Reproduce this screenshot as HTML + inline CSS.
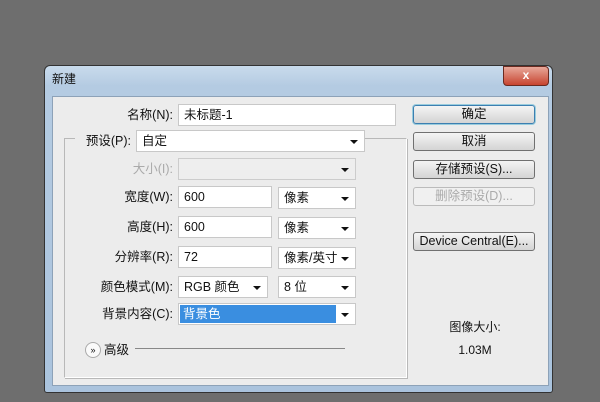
<!DOCTYPE html><html><head><meta charset="utf-8"><style>
body{margin:0;width:600px;height:402px;background:#6e6e6e;position:relative;overflow:hidden;font-family:"Liberation Sans","Noto Sans CJK SC",sans-serif;font-size:12px;color:#111}
.a{position:absolute}
.win{left:44px;top:65px;width:509px;height:328px;border-radius:6px 6px 3px 3px;background:linear-gradient(180deg,#c9dbec,#b4cbe2 20px,#aac3dd);border:1px solid #333;box-sizing:border-box}
.client{left:52px;top:96px;width:495px;height:288px;background:#ececec;border:1px solid #8da2b8}
.in{position:absolute;background:#fff;border:1px solid #c8c8c8;box-sizing:border-box;height:22px;padding:0 5px;display:flex;align-items:center;font-size:12.5px;line-height:1}
.sel:after{content:"";position:absolute;right:6px;top:9px;border:4px solid transparent;border-top:4px solid #111}
.lab{position:absolute;text-align:right;width:120px;font-size:12.5px;line-height:1}
.btn{position:absolute;left:413px;width:122px;height:19px;border:1px solid #707070;border-radius:3px;box-sizing:border-box;background:linear-gradient(#f4f4f4,#e4e4e4 50%,#d4d4d4);text-align:center;line-height:17px;font-size:12.5px}
</style></head><body>
<div class="a win"></div>
<div class="a" style="left:52px;top:70px;font-size:12px">新建</div>
<div class="a" style="left:503px;top:66px;width:44px;height:18px;border-radius:0 4px 4px 4px;background:linear-gradient(#e8a89a,#c7442f);border:1px solid #6a2a20;color:#fff;text-align:center;font-weight:bold;line-height:17px">x</div>
<div class="a client"></div>
<div class="a" style="left:64px;top:138px;width:341px;height:238px;border:1px solid #b8b8b8;border-right-color:#fff;border-bottom-color:#fff;box-shadow:1px 1px 0 #b8b8b8"></div>
<div class="a" style="left:75px;top:132px;width:290px;height:12px;background:#ececec"></div>
<div class="lab" style="left:53px;top:109px">名称(N):</div>
<div class="in" style="left:178px;top:104px;width:218px">未标题-1</div>
<div class="lab" style="left:11px;top:135px">预设(P):</div>
<div class="in sel" style="left:136px;top:130px;width:229px">自定</div>
<div class="lab" style="left:53px;top:163px;color:#aaa">大小(I):</div>
<div class="in sel" style="left:178px;top:158px;width:178px;background:#eee;border-color:#ccc"></div>
<div class="lab" style="left:53px;top:191px">宽度(W):</div>
<div class="in" style="left:178px;top:186px;width:94px">600</div>
<div class="in sel" style="left:278px;top:187px;width:78px">像素</div>
<div class="lab" style="left:53px;top:221px">高度(H):</div>
<div class="in" style="left:178px;top:216px;width:94px">600</div>
<div class="in sel" style="left:278px;top:217px;width:78px">像素</div>
<div class="lab" style="left:53px;top:251px">分辨率(R):</div>
<div class="in" style="left:178px;top:246px;width:94px">72</div>
<div class="in sel" style="left:278px;top:247px;width:78px">像素/英寸</div>
<div class="lab" style="left:53px;top:281px">颜色模式(M):</div>
<div class="in sel" style="left:178px;top:276px;width:90px">RGB 颜色</div>
<div class="in sel" style="left:278px;top:276px;width:78px">8 位</div>
<div class="lab" style="left:53px;top:308px">背景内容(C):</div>
<div class="in sel" style="left:178px;top:303px;width:178px;padding:1px"><div style="width:156px;height:18px;background:#3a8ee0;color:#fff;padding-left:3px;box-sizing:border-box;display:flex;align-items:center">背景色</div></div>
<div class="a" style="left:85px;top:342px;width:14px;height:14px;border-radius:50%;border:1px solid #aaa;background:#fafafa;font-size:9px;text-align:center;line-height:14px">»</div>
<div class="a" style="left:104px;top:344px;font-size:12.5px;line-height:1">高级</div>
<div class="a" style="left:135px;top:348px;width:210px;height:1px;background:#888"></div>
<div class="btn" style="top:105px;border-color:#3c7fb1;box-shadow:0 0 0 1px #9cd">确定</div>
<div class="btn" style="top:132px">取消</div>
<div class="btn" style="top:160px">存储预设(S)...</div>
<div class="btn" style="top:187px;color:#aaa;border-color:#bbb;background:#f0f0f0">删除预设(D)...</div>
<div class="btn" style="top:232px">Device Central(E)...</div>
<div class="a" style="left:445px;top:318px;width:60px;text-align:center">图像大小:</div>
<div class="a" style="left:445px;top:343px;width:60px;text-align:center">1.03M</div>
</body></html>
